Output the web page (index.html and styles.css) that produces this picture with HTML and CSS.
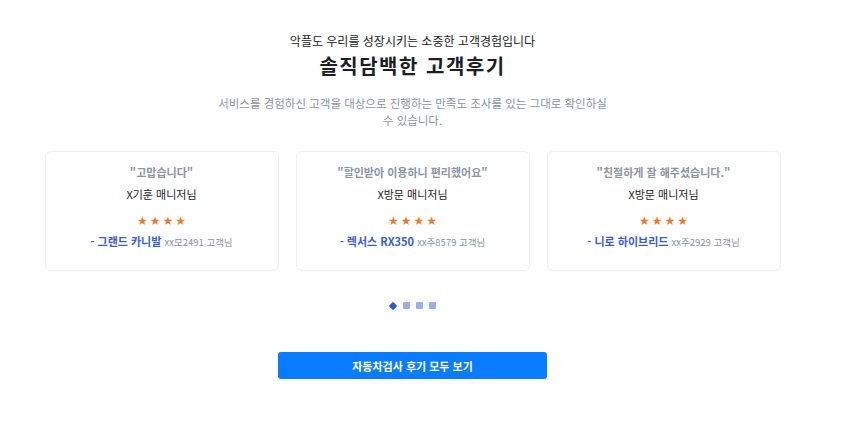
FILE: index.html
```html
<!DOCTYPE html>
<html lang="ko">
<head>
<meta charset="utf-8">
<link rel="stylesheet" href="styles.css">
</head>
<body>
<section class="reviews">
  <p class="eyebrow">악플도 우리를 성장시키는 소중한 고객경험입니다</p>
  <h2 class="title">솔직담백한 고객후기</h2>
  <p class="desc">서비스를 경험하신 고객을 대상으로 진행하는 만족도 조사를 있는 그대로 확인하실 수 있습니다.</p>
  <div class="cards">
    <div class="card">
      <p class="quote">"고맙습니다"</p>
      <p class="manager">X기훈 매니저님</p>
      <p class="stars">★★★★</p>
      <p class="who"><span class="car">- 그랜드 카니발</span> <span class="cust">xx모2491 고객님</span></p>
    </div>
    <div class="card">
      <p class="quote">"할인받아 이용하니 편리했어요"</p>
      <p class="manager">X방문 매니저님</p>
      <p class="stars">★★★★</p>
      <p class="who"><span class="car">- 렉서스 RX350</span> <span class="cust">xx주8579 고객님</span></p>
    </div>
    <div class="card">
      <p class="quote">"친절하게 잘 해주셨습니다."</p>
      <p class="manager">X방문 매니저님</p>
      <p class="stars">★★★★</p>
      <p class="who"><span class="car">- 니로 하이브리드</span> <span class="cust">xx주2929 고객님</span></p>
    </div>
  </div>
  <div class="dots">
    <span class="dot active"></span>
    <span class="dot"></span>
    <span class="dot"></span>
    <span class="dot"></span>
  </div>
  <button class="cta">자동차검사 후기 모두 보기</button>
</section>
</body>
</html>
```
FILE: styles.css
```css
* { box-sizing: border-box; }
body {
  margin: 0;
  background: #fff;
  font-family: "Noto Sans CJK KR", "Noto Sans", sans-serif;
  color: #1f2329;
}
p { margin: 0; }
.reviews {
  width: 825px;
  padding-top: 32px;
  display: flex;
  flex-direction: column;
  align-items: center;
}
.eyebrow {
  font-size: 12px;
  line-height: 18px;
  color: #222;
}
.title {
  margin: 2px 0 0;
  font-size: 20px;
  line-height: 28px;
  font-weight: 700;
  letter-spacing: 1.5px;
  color: #1b1e24;
}
.desc {
  margin-top: 15px;
  width: 400px;
  text-align: center;
  font-size: 11.5px;
  line-height: 17px;
  color: #8b93a5;
}
.cards {
  margin-top: 22px;
  display: flex;
  gap: 17px;
}
.card {
  width: 234px;
  height: 120px;
  border: 1px solid #eef0f4;
  border-radius: 6px;
  background: #fff;
  display: flex;
  flex-direction: column;
  align-items: center;
  padding-top: 12px;
}
.quote {
  font-size: 11px;
  line-height: 16px;
  font-weight: 700;
  color: #8c94a6;
}
.manager {
  margin-top: 6px;
  font-size: 11px;
  line-height: 16px;
  color: #222;
}
.stars {
  margin-top: 12px;
  font-family: "DejaVu Sans", sans-serif;
  font-size: 12px;
  line-height: 14px;
  letter-spacing: 2px;
  margin-right: -2px;
  color: #f07a2b;
}
.who {
  margin-top: 5px;
  font-size: 11px;
  line-height: 16px;
}
.car { color: #3a5bd9; font-weight: 700; }
.cust { color: #8a92a3; font-size: 9.5px; }
.dots {
  margin-top: 31px;
  display: flex;
  align-items: center;
  gap: 6px;
}
.dot {
  width: 7px;
  height: 7px;
  border-radius: 1px;
  background: #9bb0ea;
}
.dot.active {
  width: 6px;
  height: 6px;
  transform: rotate(45deg);
  background: #2f55d4;
  margin-right: 1px;
}
.cta {
  margin-top: 43px;
  width: 269px;
  height: 27px;
  border: none;
  border-radius: 3px;
  background: #0a7cff;
  color: #fff;
  font-family: "Noto Sans CJK KR", sans-serif;
  font-size: 11px;
  font-weight: 700;
}
```
